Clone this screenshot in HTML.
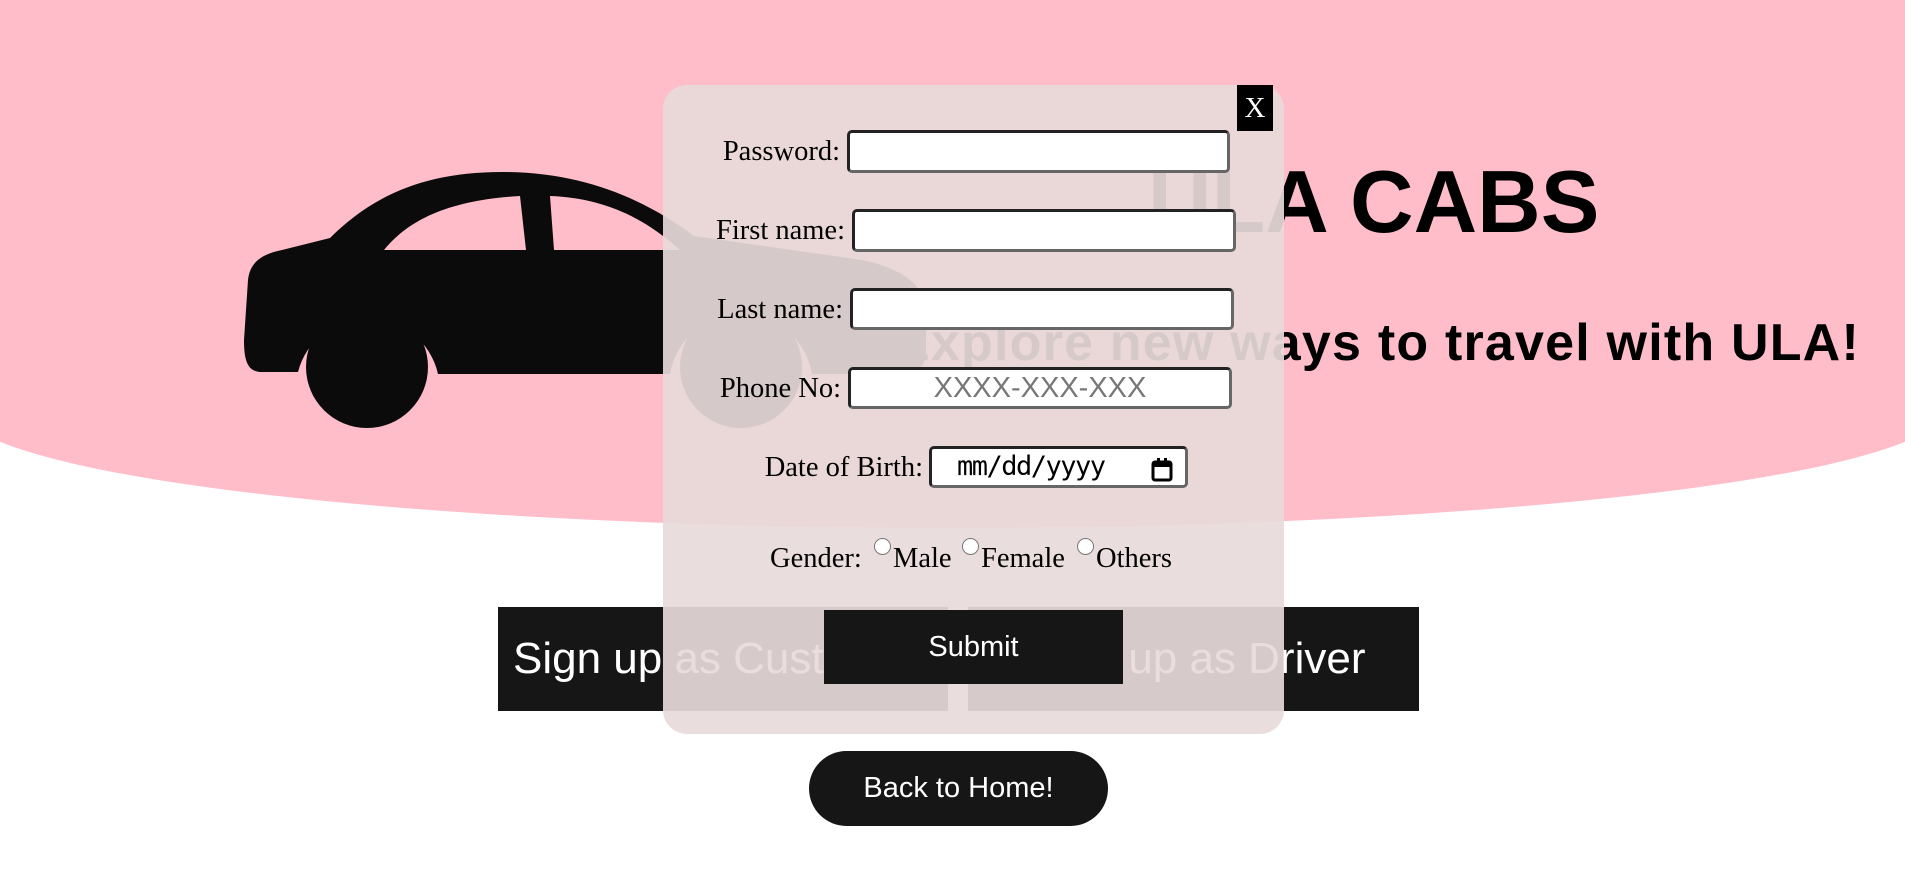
<!DOCTYPE html>
<html><head><meta charset="utf-8"><style>
*{margin:0;padding:0;box-sizing:border-box}
body{width:1905px;height:885px;overflow:hidden;background:#fff;position:relative;font-family:"Liberation Serif",serif}
.pink{position:absolute;left:-40px;top:0;width:1985px;height:528px;background:#ffbdca;border-radius:0 0 50% 50% / 0 0 120px 120px}
.abs{position:absolute}
.title{left:1148px;top:158px;font:bold 88px/1 "Liberation Sans",sans-serif;color:#000;white-space:nowrap}
.tag{left:895px;top:317px;font:bold 52px/1 "Liberation Sans",sans-serif;color:#000;white-space:nowrap;letter-spacing:1.2px}
.btn{position:absolute;background:#161616;color:#fff;font:44px/104px "Liberation Sans",sans-serif;white-space:nowrap;overflow:hidden}
.home{left:809px;top:751px;width:299px;height:75px;background:#161616;color:#fff;border-radius:38px;text-align:center;font:29px/75px "Liberation Sans",sans-serif}
.modal{left:663px;top:85px;width:621px;height:649px;background:rgba(232,218,218,0.92);border-radius:24px}
.x{left:1237px;top:85px;width:36px;height:46px;background:#000;color:#fff;font:29px/46px "Liberation Serif",serif;text-align:center}
.lbl{position:absolute;font-size:28.5px;color:#000;text-align:right;white-space:nowrap}
.inp{position:absolute;background:#fff;border:3px solid #222;border-right-color:#666;border-bottom-color:#666;border-radius:5px}
.sub{left:824px;top:610px;width:299px;height:74px;background:#161616;color:#fff;font:29px/74px "Liberation Sans",sans-serif;text-align:center}
.rad{position:absolute;width:17px;height:17px;border:1px solid #777;border-radius:50%;background:#fff}
</style></head><body>
<div class="pink"></div>
<svg class="abs" style="left:0;top:0" width="1000" height="500">
<path fill="#0b0b0b" d="M262 372 C248 372 244 362 244 340 L248 280 C250 262 262 254 282 250 L330 238 C372 196 424 172 502 172 C584 172 646 200 694 236 L862 260 C902 268 926 286 926 312 L926 352 C926 367 916 374 900 374 L812 374 A72 72 0 0 0 670 374 L438 374 A72 72 0 0 0 298 372 Z"/>
<path fill="#ffbdca" d="M384 250 C410 218 452 200 520 196 L526 250 Z"/>
<path fill="#ffbdca" d="M550 196 C602 198 642 216 680 250 L554 250 Z"/>
<circle cx="367" cy="367" r="61" fill="#0b0b0b"/>
<circle cx="741" cy="367" r="61" fill="#0b0b0b"/>
</svg>
<div class="abs title">ULA CABS</div>
<div class="abs tag">Explore new ways to travel with ULA!</div>
<div class="btn" style="left:498px;top:607px;width:450px;height:104px;padding-left:15px">Sign up as Customer</div>
<div class="btn" style="left:968px;top:607px;width:451px;height:104px;padding-left:60px">Sign up as Driver</div>
<div class="abs home">Back to Home!</div>

<div class="abs modal"></div>
<div class="abs x">X</div>
<div class="lbl" style="right:1065px;top:136px">Password:</div>
<div class="inp" style="left:847px;top:130px;width:383px;height:43px"></div>
<div class="lbl" style="right:1060px;top:215px">First name:</div>
<div class="inp" style="left:852px;top:209px;width:384px;height:43px"></div>
<div class="lbl" style="right:1062px;top:294px">Last name:</div>
<div class="inp" style="left:850px;top:288px;width:384px;height:42px"></div>
<div class="lbl" style="right:1064px;top:373px">Phone No:</div>
<div class="inp" style="left:848px;top:367px;width:384px;height:42px;color:#777;font:29px/36px 'Liberation Sans',sans-serif;text-align:center">XXXX-XXX-XXX</div>
<div class="lbl" style="right:982px;top:452px">Date of Birth:</div>
<div class="inp" style="left:929px;top:446px;width:259px;height:42px;font:27px/36px 'DejaVu Sans Mono',monospace;color:#000;padding-left:25px;letter-spacing:-1.5px">mm/dd/yyyy
<svg class="abs" style="left:218px;top:8px" width="24" height="26"><rect x="3" y="5" width="18" height="18" fill="none" stroke="#000" stroke-width="3" rx="2"/><rect x="3" y="5" width="18" height="5" fill="#000"/><rect x="7" y="1" width="3" height="5" fill="#000"/><rect x="14" y="1" width="3" height="5" fill="#000"/></svg></div>
<div class="lbl" style="left:770px;top:543px">Gender:</div>
<div class="rad" style="left:874px;top:538px"></div>
<div class="lbl" style="left:893px;top:543px">Male</div>
<div class="rad" style="left:962px;top:538px"></div>
<div class="lbl" style="left:981px;top:543px">Female</div>
<div class="rad" style="left:1077px;top:538px"></div>
<div class="lbl" style="left:1096px;top:543px">Others</div>
<div class="abs sub">Submit</div>
</body></html>
